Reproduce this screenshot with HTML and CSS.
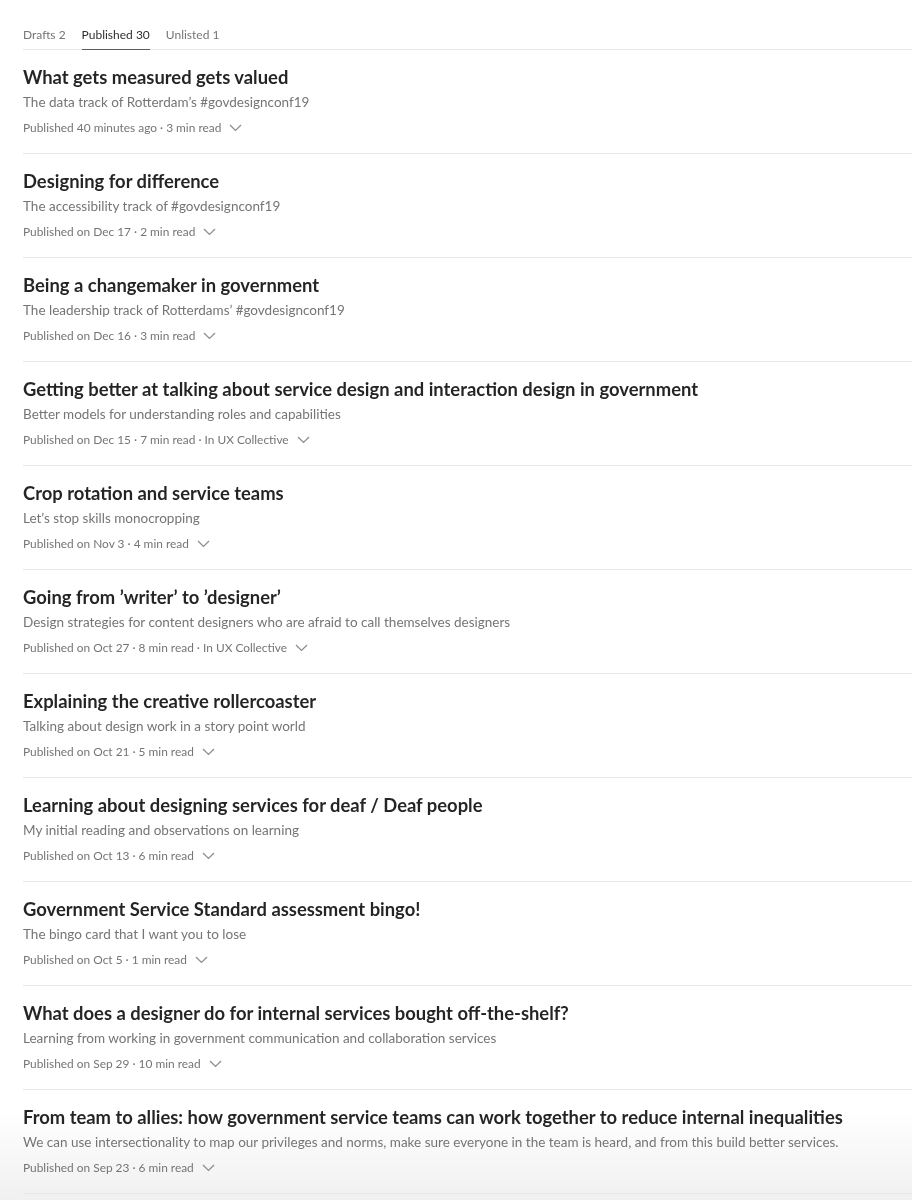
FILE: index.html
```html
<!DOCTYPE html>
<html lang="en">
<head>
  <meta charset="UTF-8">
  <title>Stories</title>
  <link rel="stylesheet" href="styles.css">
</head>
<body>

<div class="tabs">
  <a class="tab">Drafts 2</a>
  <a class="tab active">Published 30</a>
  <a class="tab">Unlisted 1</a>
</div>

<div class="stories">
  <div class="story">
    <h3>What gets measured gets valued</h3>
    <p class="sub">The data track of Rotterdam’s #govdesignconf19</p>
    <div class="meta">Published 40 minutes ago · 3 min read <svg class="chev" viewBox="0 0 13 8"><path d="M1 1l5.5 5.5L12 1"/></svg></div>
  </div>
  <div class="story">
    <h3>Designing for difference</h3>
    <p class="sub">The accessibility track of #govdesignconf19</p>
    <div class="meta">Published on Dec 17 · 2 min read <svg class="chev" viewBox="0 0 13 8"><path d="M1 1l5.5 5.5L12 1"/></svg></div>
  </div>
  <div class="story">
    <h3>Being a changemaker in government</h3>
    <p class="sub">The leadership track of Rotterdams’ #govdesignconf19</p>
    <div class="meta">Published on Dec 16 · 3 min read <svg class="chev" viewBox="0 0 13 8"><path d="M1 1l5.5 5.5L12 1"/></svg></div>
  </div>
  <div class="story">
    <h3>Getting better at talking about service design and interaction design in government</h3>
    <p class="sub">Better models for understanding roles and capabilities</p>
    <div class="meta">Published on Dec 15 · 7 min read · In UX Collective <svg class="chev" viewBox="0 0 13 8"><path d="M1 1l5.5 5.5L12 1"/></svg></div>
  </div>
  <div class="story">
    <h3>Crop rotation and service teams</h3>
    <p class="sub">Let’s stop skills monocropping</p>
    <div class="meta">Published on Nov 3 · 4 min read <svg class="chev" viewBox="0 0 13 8"><path d="M1 1l5.5 5.5L12 1"/></svg></div>
  </div>
  <div class="story">
    <h3>Going from ’writer’ to ’designer’</h3>
    <p class="sub">Design strategies for content designers who are afraid to call themselves designers</p>
    <div class="meta">Published on Oct 27 · 8 min read · In UX Collective <svg class="chev" viewBox="0 0 13 8"><path d="M1 1l5.5 5.5L12 1"/></svg></div>
  </div>
  <div class="story">
    <h3>Explaining the creative rollercoaster</h3>
    <p class="sub">Talking about design work in a story point world</p>
    <div class="meta">Published on Oct 21 · 5 min read <svg class="chev" viewBox="0 0 13 8"><path d="M1 1l5.5 5.5L12 1"/></svg></div>
  </div>
  <div class="story">
    <h3>Learning about designing services for deaf / Deaf people</h3>
    <p class="sub">My initial reading and observations on learning</p>
    <div class="meta">Published on Oct 13 · 6 min read <svg class="chev" viewBox="0 0 13 8"><path d="M1 1l5.5 5.5L12 1"/></svg></div>
  </div>
  <div class="story">
    <h3>Government Service Standard assessment bingo!</h3>
    <p class="sub">The bingo card that I want you to lose</p>
    <div class="meta">Published on Oct 5 · 1 min read <svg class="chev" viewBox="0 0 13 8"><path d="M1 1l5.5 5.5L12 1"/></svg></div>
  </div>
  <div class="story">
    <h3>What does a designer do for internal services bought off-the-shelf?</h3>
    <p class="sub">Learning from working in government communication and collaboration services</p>
    <div class="meta">Published on Sep 29 · 10 min read <svg class="chev" viewBox="0 0 13 8"><path d="M1 1l5.5 5.5L12 1"/></svg></div>
  </div>
  <div class="story">
    <h3>From team to allies: how government service teams can work together to reduce internal inequalities</h3>
    <p class="sub">We can use intersectionality to map our privileges and norms, make sure everyone in the team is heard, and from this build better services.</p>
    <div class="meta">Published on Sep 23 · 6 min read <svg class="chev" viewBox="0 0 13 8"><path d="M1 1l5.5 5.5L12 1"/></svg></div>
  </div>
</div>

<div class="fade"></div>

</body>
</html>
```

FILE: styles.css
```css
body {
  margin: 0;
  padding-left: 23px;
  font-family: Lato, 'Noto Sans', sans-serif;
  background: #fff;
  color: rgba(0, 0, 0, 0.84);
  overflow: hidden;
}
.tabs {
  display: flex;
  gap: 16px;
  height: 50px;
  border-bottom: 1px solid #e6e6e6;
  box-sizing: border-box;
}
.tab {
  font-size: 12px;
  color: #757575;
  padding-top: 27px;
  box-sizing: border-box;
  height: 50px;
}
.tab.active {
  color: rgba(0, 0, 0, 0.84);
  border-bottom: 1px solid rgba(0, 0, 0, 0.6);
}
.story {
  height: 104px;
  box-sizing: border-box;
  padding-top: 15px;
  border-bottom: 1px solid #e6e6e6;
}
.story h3 {
  margin: 0;
  font-size: 18.4px;
  line-height: 24px;
  font-weight: 700;
  color: rgba(0, 0, 0, 0.86);
}
.sub {
  margin: 3px 0 0;
  font-size: 13.5px;
  line-height: 20px;
  color: #757575;
}
.meta {
  margin-top: 6px;
  font-size: 11.9px;
  line-height: 20px;
  color: #757575;
  display: flex;
  align-items: center;
}
.chev {
  width: 13px;
  height: 8px;
  margin-left: 8px;
  fill: none;
  stroke: #8a8a8a;
  stroke-width: 1.2;
}
.fade {
  position: fixed;
  left: 0;
  right: 0;
  bottom: 0;
  height: 90px;
  z-index: -1;
  background: linear-gradient(#fff, #f0f0f0);
}
```
